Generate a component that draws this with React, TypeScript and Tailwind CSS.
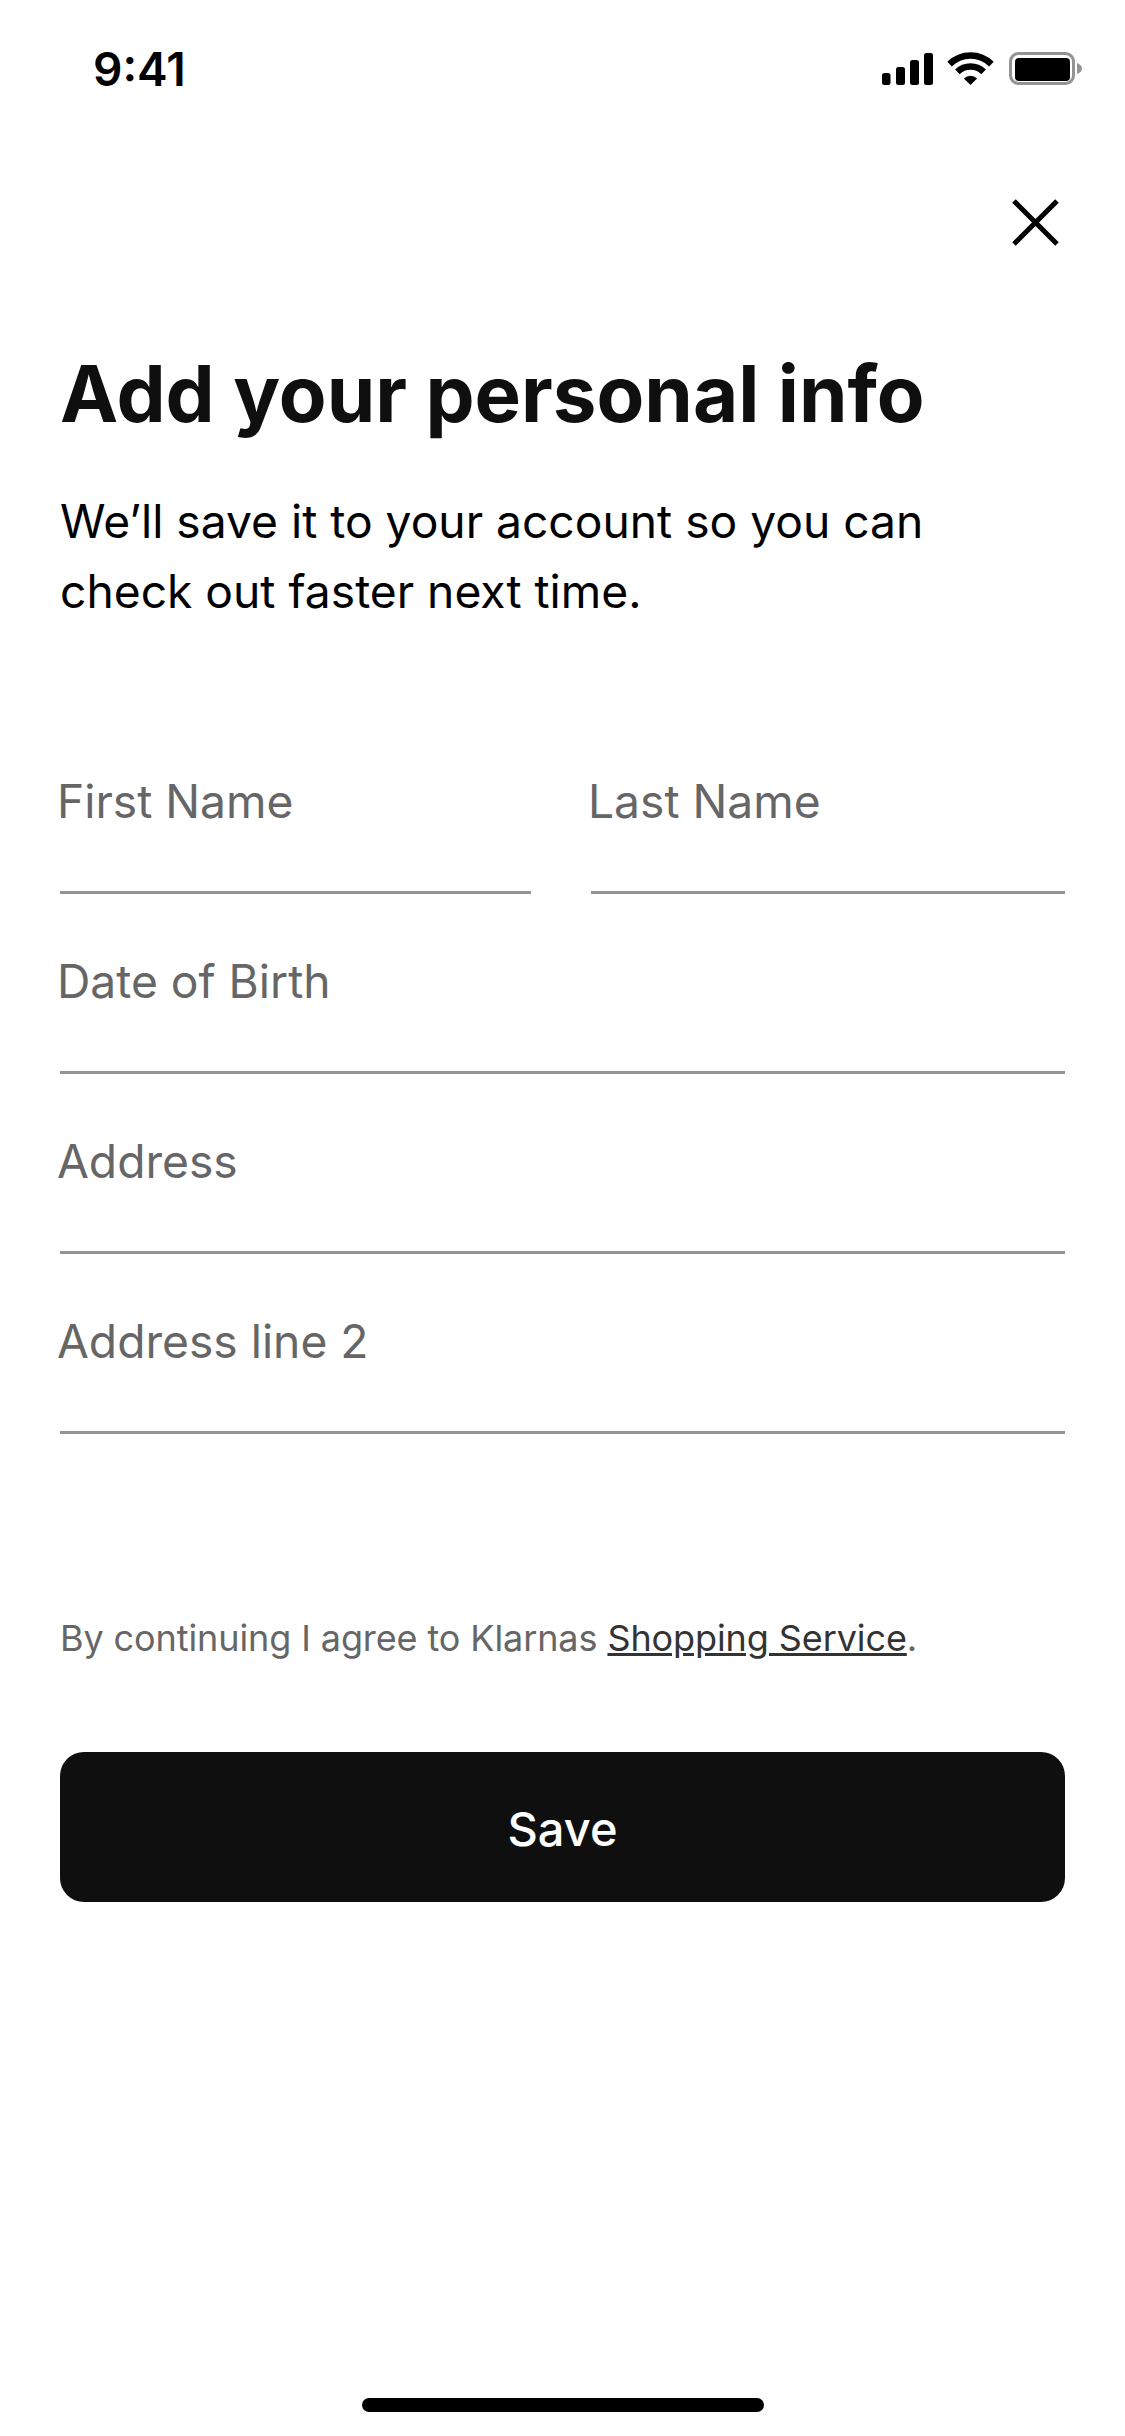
function Field({ label, className }: { label: string; className?: string }) {
  return (
    <div className={`h-[180px] flex flex-col justify-end ${className ?? ''}`}>
      <div className="text-[46.2px] leading-[60px] text-[#666666] -ml-[3px] mb-[60px]">{label}</div>
      <div className="h-[3px] bg-[#949494]" />
    </div>
  )
}

function StatusIcons() {
  return (
    <svg width="200" height="34" viewBox="0 0 200 34" fill="none">
      <rect x="0" y="21" width="8.5" height="12" rx="2.5" fill="#000" />
      <rect x="14" y="15" width="9" height="18" rx="2.5" fill="#000" />
      <rect x="28" y="8" width="9" height="25" rx="2.5" fill="#000" />
      <rect x="42" y="1" width="9" height="32" rx="2.5" fill="#000" />
      <path
        d="M67.6 12.1A29.5 29.5 0 0 1 109.4 12.1M75.4 19.9A18.5 18.5 0 0 1 101.6 19.9"
        stroke="#000"
        strokeWidth="6.5"
      />
      <path d="M81.9 26.4A9.3 9.3 0 0 1 95.1 26.4L88.5 33Z" fill="#000" />
      <rect x="128.5" y="1.5" width="63" height="30" rx="8" stroke="#949494" strokeWidth="3" />
      <rect x="133" y="6" width="55" height="23" rx="4" fill="#000" />
      <path d="M195 11C198 12 200 14 200 16.5C200 19 198 21 195 22Z" fill="#949494" />
    </svg>
  )
}

export default function App() {
  return (
    <div className="relative w-[1125px] h-[2436px] bg-white font-['Inter',sans-serif] text-[#0f0f0f]">
      {/* status bar */}
      <div className="flex items-center justify-between pl-[93px] pr-[43px] pt-[42px] h-[96px]">
        <span className="text-[46px] leading-[54px] font-semibold text-black">9:41</span>
        <StatusIcons />
      </div>

      <div className="flex justify-end pr-[66px] mt-[103px]">
        <svg width="47" height="47" viewBox="0 0 47 47" fill="none">
          <path d="M2 2L45 45M45 2L2 45" stroke="#000" strokeWidth="5" />
        </svg>
      </div>

      <div className="px-[60px]">
        <h1 className="mt-[100px] text-[78px] leading-[96px] font-bold">Add your personal info</h1>
        <p className="mt-[44px] text-[46.2px] leading-[70px] text-black">
          We’ll save it to your account so you can
          <br />
          check out faster next time.
        </p>

        <div className="mt-[88px]">
          <div className="flex gap-[60px]">
            <Field label="First Name" className="w-[471px]" />
            <Field label="Last Name" className="w-[474px]" />
          </div>
          <Field label="Date of Birth" />
          <Field label="Address" />
          <Field label="Address line 2" />
        </div>

        <p className="mt-[182px] text-[36px] leading-[44px] tracking-[-0.1px] text-[#666666]">
          By continuing I agree to Klarnas{' '}
          <span className="text-[#333333] underline">Shopping Service</span>.
        </p>

        <button className="mt-[92px] w-full h-[150px] pt-[4px] rounded-[24px] bg-[#0f0f0f] text-white text-[47px] font-medium">
          Save
        </button>
      </div>

      <div className="absolute left-[362px] bottom-[24px] w-[402px] h-[14px] rounded-full bg-black" />
    </div>
  )
}
